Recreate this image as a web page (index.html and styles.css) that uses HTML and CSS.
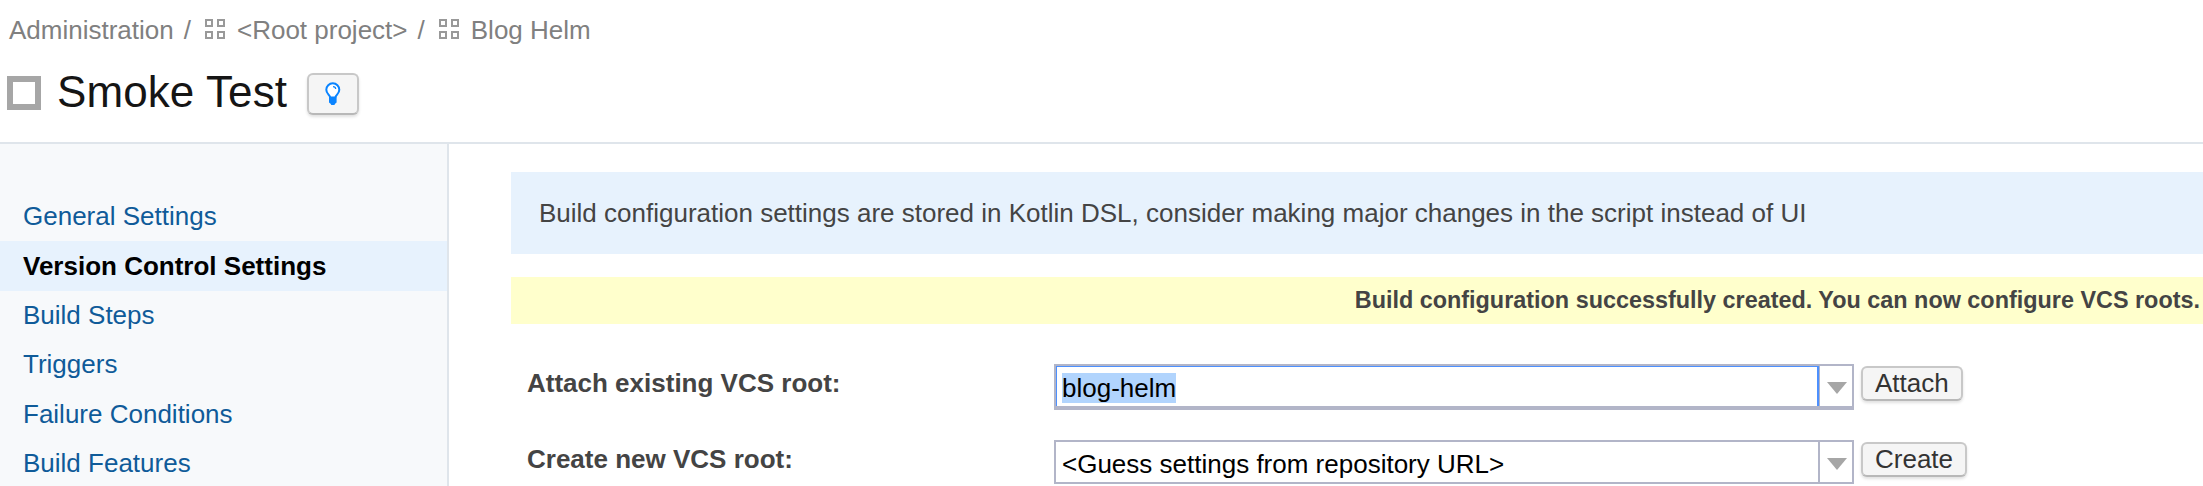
FILE: index.html
```html
<!DOCTYPE html>
<html lang="en">
<head>
<meta charset="utf-8">
<title>Smoke Test - Version Control Settings</title>
<link rel="stylesheet" href="styles.css">
</head>
<body>
<header class="header">
  <nav class="breadcrumbs">
    <a class="crumb">Administration</a><span class="slash">/</span>
    <svg class="project-icon" width="20" height="20" viewBox="0 0 20 20"><path d="M1 1h6v6H1zM13 1h6v6h-6zM1 13h6v6H1zM13 13h6v6h-6z"/></svg>
    <a class="crumb crumb-root">&lt;Root project&gt;</a><span class="slash">/</span>
    <svg class="project-icon" width="20" height="20" viewBox="0 0 20 20"><path d="M1 1h6v6H1zM13 1h6v6h-6zM1 13h6v6H1zM13 13h6v6h-6z"/></svg>
    <a class="crumb">Blog Helm</a>
  </nav>
  <div class="title-row">
    <span class="build-icon"></span>
    <h1 class="title">Smoke Test</h1>
    <button class="hint" aria-label="Suggestions">
      <svg width="16" height="24" viewBox="0 0 16 24"><path class="bulb" d="M5.200 15.500C4.900 12.800 1.300 11.800 1.300 7.700a6.500 6.400 0 0 1 13 0C14.300 11.800 10.700 12.800 10.400 15.500"/><path class="glint" d="M8 4.700c1.700 0 2.600.8 2.700 2.300"/><path class="base" d="M4 14.500h7.600v6l-1.500 1.200-.7 1.300H6.300l-.7-1.300L4 20.500z"/></svg>
    </button>
  </div>
</header>
<div class="page">
  <nav class="sidebar">
    <a class="item">General Settings</a>
    <a class="item selected">Version Control Settings</a>
    <a class="item">Build Steps</a>
    <a class="item">Triggers</a>
    <a class="item">Failure Conditions</a>
    <a class="item">Build Features</a>
  </nav>
  <main class="content">
    <div class="notice">Build configuration settings are stored in Kotlin DSL, consider making major changes in the script instead of UI</div>
    <div class="success">Build configuration successfully created. You can now configure VCS roots.</div>
    <div class="row">
      <label class="label">Attach existing VCS root:</label>
      <div class="combo focused">
        <div class="field"><span class="chosen">blog-helm</span></div>
        <span class="toggle"><svg width="20" height="12" viewBox="0 0 20 12"><path d="M0 0h20L10 12z"/></svg></span>
      </div>
      <button class="btn">Attach</button>
    </div>
    <div class="row">
      <label class="label">Create new VCS root:</label>
      <div class="combo">
        <div class="field"><span>&lt;Guess settings from repository URL&gt;</span></div>
        <span class="toggle"><svg width="20" height="12" viewBox="0 0 20 12"><path d="M0 0h20L10 12z"/></svg></span>
      </div>
      <button class="btn">Create</button>
    </div>
  </main>
</div>
</body>
</html>
```
FILE: styles.css
```css
* { box-sizing: border-box; }
body {
  margin: 0;
  height: 486px;
  overflow: hidden;
  display: flex;
  flex-direction: column;
  background: #fff;
  color: #444;
  font: 26px/30px "Liberation Sans", Arial, sans-serif;
}
.header {
  flex: none;
  height: 144px;
  padding: 15px 0 0 7px;
  border-bottom: 2px solid #dfe5eb;
}
.breadcrumbs {
  display: flex;
  align-items: center;
  height: 30px;
  padding-left: 2px;
  color: #808080;
  white-space: nowrap;
}
.slash { margin: 0 14px 0 10px; }
.project-icon { margin-right: 12px; margin-top: -2px; fill: none; stroke: #999; stroke-width: 2; }
.title-row { display: flex; align-items: flex-start; padding-top: 17px; }
.build-icon { width: 34px; height: 34px; margin-top: 14px; border: 6px solid #a6a6a6; }
.title { margin: 5px 0 0 16px; width: 250px; color: #151515; font-size: 44px; font-weight: 400; line-height: 50px; letter-spacing: .1px; white-space: nowrap; }
.hint, .btn {
  border: 2px solid #c8c8c8;
  border-bottom-color: #b8b8b8;
  border-radius: 6px;
  background: #f5f5f5;
  box-shadow: 0 2px 3px rgba(0, 0, 0, .12);
}
.hint { width: 52px; height: 42px; margin-top: 11px; padding: 0; display: flex; justify-content: center; align-items: center; }
.bulb { fill: #fff; stroke: #0a84ff; stroke-width: 2; }
.glint { fill: none; stroke: #0a84ff; stroke-width: 1.2; }
.base { fill: #0a84ff; }
.page { flex: 1; display: flex; min-height: 0; }
.sidebar { flex: none; width: 449px; padding-top: 48px; border-right: 2px solid #dfe5eb; background: #f7f9fb; }
.item { display: block; height: 49.4px; padding: 9px 0 0 23px; color: #0f5b99; }
.item:last-child { height: 40px; }
.selected { padding-top: 10px; background: #e7f2fd; color: #000; font-weight: 700; }
.content { flex: 1; min-width: 0; padding: 28px 0 0 62px; }
.notice { height: 82px; padding: 26px 28px; background: #e7f2fd; white-space: nowrap; }
.success { height: 47px; margin-top: 23px; margin-bottom: 40px; padding: 8px 3px 0 0; background: #ffc; text-align: right; font-size: 23.4px; font-weight: 700; white-space: nowrap; }
.row { display: flex; align-items: flex-start; padding-left: 16px; }
.row + .row { margin-top: 30px; }
.label { width: 527px; padding-top: 4px; font-weight: 700; }
.combo { display: flex; width: 800px; height: 44px; border: 2px solid #b2b5c8; background: #fff; color: #000; }
.field { flex: 1; padding: 7px 0 0 6px; white-space: nowrap; border-right: 2px solid #b2b5c8; }
.field span { display: inline-block; height: 30px; }
.toggle { width: 32px; padding: 16px 0 0 7px; line-height: 0; fill: #a6a6a6; }
.focused { height: 46px; border-bottom-width: 4px; }
.focused .field { padding: 6px 0 0 5px; border: solid #4d90fe; border-width: 1px 2px 0 1px; }
.focused .toggle { width: 33px; border-left: 1px solid #b2b5c8; }
.chosen { background: #b1d4fd; }
.btn { height: 35px; margin: 2px 0 0 7px; padding: 0 12px 1px; color: #333; font: inherit; line-height: 30px; }
```
